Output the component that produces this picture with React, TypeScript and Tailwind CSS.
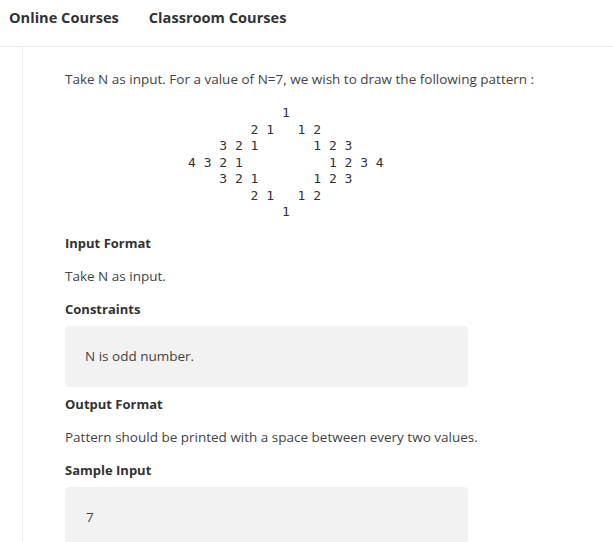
import React from "react";

const rows: (number | null)[][] = [
  [null, null, null, null, null, null, 1, null, null, null, null, null, null],
  [null, null, null, null, 2, 1, null, 1, 2, null, null, null, null],
  [null, null, 3, 2, 1, null, null, null, 1, 2, 3, null, null],
  [4, 3, 2, 1, null, null, null, null, null, 1, 2, 3, 4],
  [null, null, 3, 2, 1, null, null, null, 1, 2, 3, null, null],
  [null, null, null, null, 2, 1, null, 1, 2, null, null, null, null],
  [null, null, null, null, null, null, 1, null, null, null, null, null, null],
];

const pattern = rows
  .map((r) => r.map((c) => (c === null ? "  " : `${c} `)).join("").replace(/\s+$/, ""))
  .join("\n");

function Heading({ children }: { children: React.ReactNode }) {
  return <h3 className="text-[13px] font-bold leading-[20px] text-[#333]">{children}</h3>;
}

export default function App() {
  return (
    <div className="min-h-screen bg-white font-['Open_Sans',sans-serif] text-[#444]">
      <nav className="flex h-[47px] items-start gap-[30px] border-b border-[#ececec] px-[9px] pt-[7px] text-[14.6px] font-bold leading-[20px] text-[#333]">
        <span>Online Courses</span>
        <span>Classroom Courses</span>
      </nav>

      <div className="ml-[22px] border-l border-[#ececec] pl-[42px] pt-[22px]">
        <p className="text-[13.5px] leading-[20px]">
          Take N as input. For a value of N=7, we wish to draw the following pattern :
        </p>

        <pre className="mt-[16px] pl-[123px] font-['DejaVu_Sans_Mono',monospace] text-[13px] leading-[16.5px] text-[#333]">
          {pattern}
        </pre>

        <div className="mt-[12px] flex flex-col">
          <Heading>Input Format</Heading>
          <p className="mt-[13px] text-[13.5px] leading-[20px]">Take N as input.</p>
          <div className="mt-[13px]">
            <Heading>Constraints</Heading>
          </div>
          <div className="mt-[7px] flex h-[61px] w-[403px] items-center rounded-[4px] bg-[#f2f2f2] px-[20px] text-[13.5px]">
            N is odd number.
          </div>
          <div className="mt-[7px]">
            <Heading>Output Format</Heading>
          </div>
          <p className="mt-[13px] text-[13.5px] leading-[20px]">
            Pattern should be printed with a space between every two values.
          </p>
          <div className="mt-[13px]">
            <Heading>Sample Input</Heading>
          </div>
          <div className="mt-[7px] flex h-[61px] w-[403px] items-center rounded-[4px] bg-[#f2f2f2] px-[21px] text-[13.5px]">
            7
          </div>
        </div>
      </div>
    </div>
  );
}
